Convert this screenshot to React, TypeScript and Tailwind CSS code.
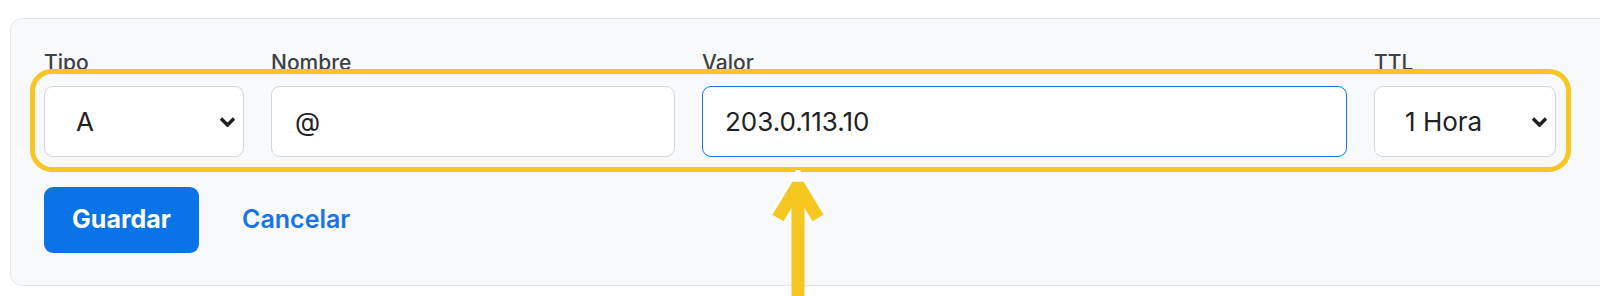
import { ChangeEvent, useState } from "react";

const font = { fontFamily: "Inter, 'Noto Sans', sans-serif" };

function Chevron() {
  return (
    <svg
      className="pointer-events-none absolute right-[8px] top-1/2 -translate-y-1/2"
      width="17"
      height="11"
      viewBox="0 0 17 11"
      fill="none"
    >
      <polyline points="2,2 8.5,8.5 15,2" stroke="#1f1f1f" strokeWidth="3.4" />
    </svg>
  );
}

function Field({ label, width, children }: { label: string; width: string; children: React.ReactNode }) {
  return (
    <div className={`flex flex-col ${width}`}>
      <label className="mb-[9px] h-[28px] text-[21px] leading-[28px] font-medium text-[#3c4043]">{label}</label>
      {children}
    </div>
  );
}

export default function App() {
  const [tipo, setTipo] = useState("A");
  const [nombre, setNombre] = useState("@");
  const [valor, setValor] = useState("203.0.113.10");
  const [ttl, setTtl] = useState("3600");

  return (
    <div className="relative h-[296px] w-[1600px] overflow-hidden bg-white" style={font}>
      <div className="pl-[10px] pt-[18px]">
        <div className="w-[1620px] rounded-[12px] border border-[#e4e6e9] bg-[#f8f9fa] pb-[32px] pl-[33px] pt-[30px]">
          <div className="flex gap-[27px]">
            <Field label="Tipo" width="w-[200px]">
              <div className="relative">
                <select
                  value={tipo}
                  onChange={(e: ChangeEvent<HTMLSelectElement>) => setTipo(e.target.value)}
                  className="h-[71px] w-full appearance-none rounded-[9px] border border-[#d3d6da] bg-white pl-[31px] text-[26px] text-[#202124] outline-none"
                >
                  <option value="A">A</option>
                  <option value="AAAA">AAAA</option>
                  <option value="CNAME">CNAME</option>
                  <option value="MX">MX</option>
                  <option value="TXT">TXT</option>
                </select>
                <Chevron />
              </div>
            </Field>
            <Field label="Nombre" width="w-[404px]">
              <input
                value={nombre}
                onChange={(e) => setNombre(e.target.value)}
                className="h-[71px] w-full rounded-[9px] border border-[#d3d6da] bg-white pl-[23px] text-[26px] text-[#202124] outline-none"
              />
            </Field>
            <Field label="Valor" width="w-[645px]">
              <input
                value={valor}
                onChange={(e) => setValor(e.target.value)}
                className="h-[71px] w-full rounded-[9px] border-[1.5px] border-[#1a73e8] bg-white pl-[22px] text-[26px] text-[#202124] outline-none"
              />
            </Field>
            <Field label="TTL" width="w-[182px]">
              <div className="relative">
                <select
                  value={ttl}
                  onChange={(e: ChangeEvent<HTMLSelectElement>) => setTtl(e.target.value)}
                  className="h-[71px] w-full appearance-none rounded-[9px] border border-[#d3d6da] bg-white pl-[30px] text-[26px] text-[#202124] outline-none"
                >
                  <option value="300">5 Min</option>
                  <option value="3600">1 Hora</option>
                  <option value="86400">1 Día</option>
                </select>
                <Chevron />
              </div>
            </Field>
          </div>

          <div className="mt-[30px] flex items-center">
            <button
              type="button"
              className="h-[66px] w-[155px] rounded-[9px] bg-[#0a74e6] text-[25px] font-bold text-white"
            >
              Guardar
            </button>
            <button type="button" className="ml-[43px] text-[25px] font-semibold text-[#1a73e8]">
              Cancelar
            </button>
          </div>
        </div>
      </div>

      {/* annotation: highlight box */}
      <div className="pointer-events-none absolute left-[30px] top-[69px] h-[103px] w-[1541px] rounded-[22px] border-[5px] border-[#f6c621]" />

      {/* annotation: arrow */}
      <svg className="pointer-events-none absolute left-[760px] top-[170px]" width="80" height="126" viewBox="760 170 80 126">
        <g stroke="#ffffff" strokeWidth="19" fill="none">
          <polyline points="778,218 798,185 818,218" />
        </g>
        <line x1="798" y1="188" x2="798" y2="296" stroke="#f6c621" strokeWidth="13" />
        <polyline points="778,218 798,185 818,218" stroke="#f6c621" strokeWidth="13" fill="none" strokeLinejoin="bevel" />
      </svg>
    </div>
  );
}
